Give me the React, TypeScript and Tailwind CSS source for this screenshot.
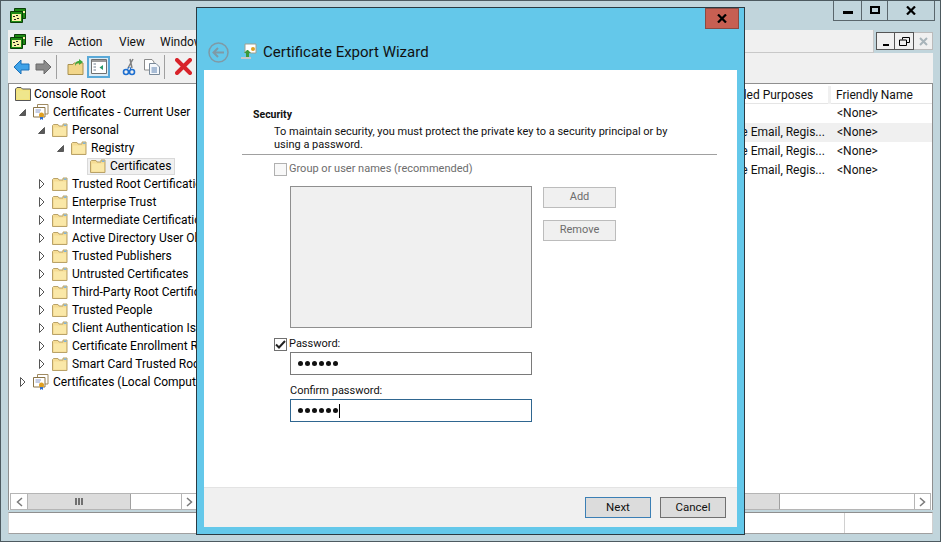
import React from "react";

const treeRows = [
  { label: "Trusted Root Certification Authorities" },
  { label: "Enterprise Trust" },
  { label: "Intermediate Certification Authorities" },
  { label: "Active Directory User Object" },
  { label: "Trusted Publishers" },
  { label: "Untrusted Certificates" },
  { label: "Third-Party Root Certification Authorities" },
  { label: "Trusted People" },
  { label: "Client Authentication Issuers" },
  { label: "Certificate Enrollment Requests" },
  { label: "Smart Card Trusted Roots" },
];

const Folder = () => (
  <svg width="16" height="14" viewBox="0 0 16 14" className="shrink-0">
    <path d="M0.5 13.5V2.5L1.5 1.5H6L7 3H11V1H15V13.5Z" fill="#f5dc94" stroke="#b9a268" />
    <path d="M2 4.5H14V12.5H2Z" fill="#fae8a8" />
    <path d="M12 1.5H14.5V3H12Z" fill="#7db4e0" />
  </svg>
);

const CertIcon = () => (
  <svg width="16" height="16" viewBox="0 0 16 16" className="shrink-0">
    <path d="M4.5 0.5H15V10H4.5Z" fill="#fff" stroke="#a08a60" />
    <path d="M0.5 3.5H12V13H0.5Z" fill="#fff" stroke="#8a7448" />
    <path d="M2.5 6H8M2.5 8H7" stroke="#8a9ac8" />
    <circle cx="8.5" cy="11" r="2.5" fill="#e0a020" />
    <path d="M7 13V16L8.5 15L10 16V13" fill="#2f6fd0" />
  </svg>
);

const MmcIcon = () => (
  <svg width="16" height="15" viewBox="0 0 16 15" className="shrink-0">
    <path d="M4.5 0.5H15.5V10.5H4.5Z" fill="#1f8a14" stroke="#0b3f08" />
    <path d="M0.5 3.5H12.5V14.5H0.5Z" fill="#1f8a14" stroke="#0b3f08" />
    <path d="M2 6H11V13H2Z" fill="#f8f2a6" />
    <path d="M3 8H5V9H3ZM6 7H8V8H6ZM7 10H9V11H7ZM4 11H6V12H4Z" fill="#222" />
    <path d="M13 3H15V5H13Z" fill="#f8f2a6" />
  </svg>
);

const Expanded = () => (
  <svg width="7" height="7" viewBox="0 0 7 7" className="shrink-0">
    <path d="M6.5 0.5V6.5H0.5Z" fill="#595959" stroke="#595959" />
  </svg>
);

const Collapsed = () => (
  <svg width="6" height="10" viewBox="0 0 6 10" className="ml-[1px] shrink-0">
    <path d="M0.5 0.5L5 5L0.5 9.5Z" fill="#fff" stroke="#555" />
  </svg>
);

const Chevron = ({ left }: { left?: boolean }) => (
  <svg width="7" height="10" viewBox="0 0 7 10">
    <path d={left ? "M6 1L1.5 5L6 9" : "M1 1L5.5 5L1 9"} fill="none" stroke="#7a7a7a" strokeWidth="1.5" />
  </svg>
);

const TreeRow = ({
  indent,
  arrow,
  icon,
  label,
}: {
  indent: string;
  arrow?: React.ReactNode;
  icon: React.ReactNode;
  label: string;
}) => (
  <div className={`flex h-[18px] items-center ${indent}`}>
    <span className="flex w-[14px] shrink-0 items-center">{arrow}</span>
    {icon}
    <span className="ml-[4px] whitespace-nowrap">{label}</span>
  </div>
);

const ToolbarSeparator = ({ className }: { className: string }) => (
  <div className={`h-[24px] w-px bg-[#a0a0a0] ${className}`} />
);

const Toolbar = () => (
  <div className="flex h-[30px] items-center bg-[#f0f0f0] pb-[3px] pl-[4px]">
    <svg width="18" height="16" viewBox="0 0 18 16" className="ml-[1px]">
      <path d="M1 8L8 1V5H16V11H8V15Z" fill="#3ea2e8" stroke="#1a70b8" />
    </svg>
    <svg width="18" height="16" viewBox="0 0 18 16" className="ml-[3px]">
      <path d="M17 8L10 1V5H2V11H10V15Z" fill="#8a8a8a" stroke="#6a6a6a" />
    </svg>
    <ToolbarSeparator className="ml-[4px]" />
    <svg width="18" height="18" viewBox="0 0 18 18" className="ml-[10px]">
      <path d="M1 6.5H6L7 5H16V16.5H1Z" fill="#f2d68a" stroke="#a8904f" />
      <path d="M8 8C8 4 10 3 12 3V1L16 4L12 7V5C10 5 9 6 8 8Z" fill="#3fa83a" />
    </svg>
    <div className="ml-[2px] flex h-[22px] w-[23px] items-center justify-center border-2 border-[#5aa9d8] bg-[#dcebf5]">
      <svg width="16" height="15" viewBox="0 0 16 15">
        <path d="M0.5 0.5H15.5V14.5H0.5Z" fill="#fff" stroke="#707070" />
        <path d="M1 1H15V3H1Z" fill="#9a9a9a" />
        <path d="M2.5 5H5M2.5 8H5M2.5 11H5" stroke="#708090" />
        <path d="M12 6V11L8.5 8.5Z" fill="#2a9a6a" />
      </svg>
    </div>
    <svg width="14" height="18" viewBox="0 0 14 18" className="ml-[12px]">
      <path d="M11 1L6 10M8 1L10 10" stroke="#808080" strokeWidth="1.5" />
      <circle cx="4" cy="14" r="2.5" fill="none" stroke="#1f70d0" strokeWidth="1.6" />
      <circle cx="10" cy="14" r="2.5" fill="none" stroke="#1f70d0" strokeWidth="1.6" />
      <path d="M5 12L7 9M9 12L8 9" stroke="#1f70d0" />
    </svg>
    <svg width="16" height="16" viewBox="0 0 16 16" className="ml-[8px]">
      <path d="M0.5 0.5H8L10 3V11H0.5Z" fill="#fff" stroke="#8a8a8a" />
      <path d="M5.5 4.5H12L15.5 8V15.5H5.5Z" fill="#f5f8fc" stroke="#7a8a9a" />
      <path d="M7.5 9H13M7.5 11H13M7.5 13H13" stroke="#5a80b0" />
    </svg>
    <ToolbarSeparator className="ml-[4px]" />
    <svg width="17" height="17" viewBox="0 0 17 17" className="ml-[10px]">
      <path d="M2 2L15 15M15 2L2 15" stroke="#d8232a" strokeWidth="4" strokeLinecap="round" />
    </svg>
  </div>
);

const ScrollBar = ({ thumb }: { thumb: string }) => (
  <div className="flex h-[17px] border border-[#b5b5b5] bg-white">
    <div className="flex w-[17px] shrink-0 items-center justify-center border-r border-[#b5b5b5]">
      <Chevron left />
    </div>
    <div className={`flex shrink-0 items-center justify-center gap-px border-r border-[#a0a0a0] bg-[#dcdcdc] ${thumb}`}>
      <span className="h-[7px] w-[2px] bg-[#707070]" />
      <span className="h-[7px] w-[2px] bg-[#707070]" />
      <span className="h-[7px] w-[2px] bg-[#707070]" />
    </div>
    <div className="flex-1" />
    <div className="flex w-[16px] shrink-0 items-center justify-center border-l border-[#b5b5b5]">
      <Chevron />
    </div>
  </div>
);

const TreePane = () => (
  <div className="flex w-[189px] shrink-0 flex-col overflow-hidden">
    <div className="flex-1 overflow-hidden pt-[1px] text-black">
      <div className="flex h-[18px] items-center pl-[6px]">
        <svg width="16" height="14" viewBox="0 0 16 14" className="shrink-0">
          <path d="M0.5 13.5V2L2 0.5H6L7.5 2H15.5V13.5Z" fill="#f3e27a" stroke="#555" />
          <path d="M2 3.5H14V12H2Z" fill="#efe68c" />
        </svg>
        <span className="ml-[3px] whitespace-nowrap">Console Root</span>
      </div>
      <TreeRow indent="pl-[10px]" arrow={<Expanded />} icon={<CertIcon />} label="Certificates - Current User" />
      <TreeRow indent="pl-[29px]" arrow={<Expanded />} icon={<Folder />} label="Personal" />
      <TreeRow indent="pl-[48px]" arrow={<Expanded />} icon={<Folder />} label="Registry" />
      <div className="flex h-[18px] items-center pl-[78px]">
        <div className="flex h-[17px] items-center gap-[4px] border border-[#d9d9d9] bg-[#f0f0f0] pl-[2px] pr-[3px]">
          <Folder />
          <span className="whitespace-nowrap">Certificates</span>
        </div>
      </div>
      {treeRows.map((row) => (
        <TreeRow key={row.label} indent="pl-[29px]" arrow={<Collapsed />} icon={<Folder />} label={row.label} />
      ))}
      <TreeRow indent="pl-[10px]" arrow={<Collapsed />} icon={<CertIcon />} label="Certificates (Local Computer)" />
    </div>
    <div className="pl-[1px]">
      <ScrollBar thumb="w-[103px]" />
    </div>
  </div>
);

const rows = [
  { purpose: "", name: "<None>", hl: false },
  { purpose: "Secure Email, Regis...", name: "<None>", hl: true },
  { purpose: "Secure Email, Regis...", name: "<None>", hl: false },
  { purpose: "Secure Email, Regis...", name: "<None>", hl: false },
];

const ListPane = () => (
  <div className="flex min-w-0 flex-1 flex-col">
    <div className="mt-[2px] flex h-[18px] items-center justify-end border-b border-[#e5e5e5] pt-[1px] pr-[8px]">
      <div className="w-[120px] border-r-[3px] border-[#f0f0f0] pl-[2px] whitespace-nowrap">Intended Purposes</div>
      <div className="w-[93px] pl-[5px]">Friendly Name</div>
    </div>
    <div className="flex-1">
      {rows.map((row, i) => (
        <div key={i} className={`flex h-[19px] items-center justify-end pr-[8px] pb-[1px] ${row.hl ? "bg-[#f0f0f0]" : ""}`}>
          <div className="w-[120px] whitespace-nowrap">{row.purpose}</div>
          <div className="w-[93px] pl-[6px]">{row.name}</div>
        </div>
      ))}
    </div>
    <div className="pr-[1px] pl-[2px]">
      <ScrollBar thumb="w-[562px]" />
    </div>
  </div>
);

const Checkbox = ({ checked }: { checked?: boolean }) => (
  <span
    className={`flex h-[13px] w-[13px] shrink-0 items-center justify-center border ${
      checked ? "border-[#707070] bg-white" : "border-[#b0b0b0] bg-[#f8f8f8]"
    }`}
  >
    {checked && (
      <svg width="11" height="9" viewBox="0 0 11 9">
        <path d="M1 4.5L4 7.5L10 1" fill="none" stroke="#222" strokeWidth="2" />
      </svg>
    )}
  </span>
);

const Dots = ({ caret }: { caret?: boolean }) => (
  <div className="flex items-center gap-[2px] pl-[7px]">
    {[0, 1, 2, 3, 4, 5].map((d) => (
      <span key={d} className="h-[5px] w-[5px] rounded-full bg-[#111]" />
    ))}
    {caret && <span className="-ml-[1px] h-[14px] w-px bg-black" />}
  </div>
);

const Dialog = () => (
  <div className="absolute top-[6px] left-[195px] flex h-[528px] w-[549px] flex-col border border-[#2b3a42] bg-[#64c8ea]">
    <div className="flex h-[19px] justify-end pr-[5px]">
      <div className="flex h-[21px] w-[34px] items-center justify-center border border-[#8a4a42] bg-[#c75f52]">
        <svg width="10" height="9" viewBox="0 0 10 9">
          <path d="M1 0.5L9 8.5M9 0.5L1 8.5" stroke="#000" strokeWidth="2.2" />
        </svg>
      </div>
    </div>
    <div className="flex h-[43px] items-center pt-[7px] pl-[11px]">
      <svg width="21" height="21" viewBox="0 0 21 21">
        <circle cx="10.5" cy="10.5" r="9.5" fill="none" stroke="#7f9aa6" strokeWidth="1.5" />
        <path d="M5 10.5H16M10 6L5.5 10.5L10 15" fill="none" stroke="#7f9aa6" strokeWidth="2" />
      </svg>
      <svg width="18" height="18" viewBox="0 0 18 18" className="ml-[11px]">
        <path d="M5 1H16V10H5Z" fill="#fff" stroke="#a0a090" />
        <path d="M7 7L4 10H6V14H9V10H11L8 7Z" fill="#3a9a3a" />
        <circle cx="13" cy="6" r="2" fill="#e0a020" />
        <path d="M1 14H11V16H1Z" fill="#c8c8c8" />
      </svg>
      <span className="ml-[5px] text-[15px] leading-[20px] text-[#111]">Certificate Export Wizard</span>
    </div>
    <div className="mx-[7px] mb-[7px] flex flex-1 flex-col bg-white text-[11px]">
      <div className="flex-1 pt-[38px] pl-[38px]">
        <div className="pl-[11px] text-[10.5px] leading-[13px] font-bold">Security</div>
        <div className="mt-[4px] pl-[32px] leading-[13px] whitespace-nowrap">
          To maintain security, you must protect the private key to a security principal or by
          <br />
          using a password.
        </div>
        <div className="mt-[3px] mr-[20px] h-px bg-[#a0a0a0]" />
        <div className="mt-[7px] flex items-center gap-[2px] pl-[32px] text-[#6d6d6d]">
          <Checkbox />
          <span className="leading-[14px]">Group or user names (recommended)</span>
        </div>
        <div className="mt-[10px] flex pl-[48px]">
          <div className="h-[142px] w-[242px] border border-[#8f8f8f] bg-[#f0f0f0]" />
          <div className="ml-[11px] flex w-[73px] flex-col gap-[12px] pt-[1px] text-[#6d6d6d]">
            <div className="flex h-[21px] items-center justify-center border border-[#bcbcbc] bg-[#f0f0f0]">Add</div>
            <div className="flex h-[21px] items-center justify-center border border-[#bcbcbc] bg-[#f0f0f0]">Remove</div>
          </div>
        </div>
        <div className="mt-[9px] flex items-center gap-[2px] pl-[32px]">
          <Checkbox checked />
          <span className="leading-[14px]">Password:</span>
        </div>
        <div className="mt-[1px] ml-[48px] flex h-[23px] w-[242px] items-center border border-[#7a7a7a]">
          <Dots />
        </div>
        <div className="mt-[8px] ml-[48px] leading-[16px]">Confirm password:</div>
        <div className="ml-[48px] flex h-[23px] w-[242px] items-center border border-[#2f6690]">
          <Dots caret />
        </div>
      </div>
      <div className="flex h-[40px] items-center justify-end gap-[9px] border-t border-[#e3e3e3] bg-[#f0f0f0] pr-[11px] text-[11.5px]">
        <div className="flex h-[21px] w-[66px] items-center justify-center border border-[#3b7fb5] bg-[#dcdcdc]">Next</div>
        <div className="flex h-[21px] w-[66px] items-center justify-center border border-[#707070] bg-[#dcdcdc]">Cancel</div>
      </div>
    </div>
  </div>
);

export default function App() {
  return (
    <div
      className="relative flex h-[542px] w-[941px] flex-col overflow-hidden border border-[#4d5a60] bg-[#c1d5dc] text-[12px] text-[#111]"
      style={{ fontFamily: 'Roboto, "Noto Sans", sans-serif' }}
    >
      <div className="flex h-[29px] shrink-0 justify-between">
        <div className="pt-[7px] pl-[9px]">
          <MmcIcon />
        </div>
        <div className="mr-[5px] -mt-px flex h-[21px] border-x border-b border-[#5a666c]">
          <div className="flex w-[28px] items-center justify-center border-r border-[#5a666c]">
            <span className="mt-[4px] h-[3px] w-[10px] bg-black" />
          </div>
          <div className="flex w-[26px] items-center justify-center border-r border-[#5a666c]">
            <span className="h-[8px] w-[10px] border-2 border-black" />
          </div>
          <div className="flex w-[46px] items-center justify-center">
            <svg width="10" height="9" viewBox="0 0 10 9">
              <path d="M1 0.5L9 8.5M9 0.5L1 8.5" stroke="#000" strokeWidth="2.2" />
            </svg>
          </div>
        </div>
      </div>
      <div className="mx-[7px] flex min-h-0 flex-1 flex-col">
        <div className="flex h-[23px] shrink-0">
          <div className="flex flex-1 items-center border-r border-b border-[#c8c8c8] bg-[#f0f0f0] pl-[2px]">
            <MmcIcon />
            <span className="ml-[8px] w-[34px] pt-[1px]">File</span>
            <span className="w-[51px] pt-[1px]">Action</span>
            <span className="w-[41px] pt-[1px]">View</span>
            <span className="pt-[1px]">Window</span>
          </div>
          <div className="mt-[2px] ml-[2px] flex h-[18px] w-[57px]">
            <div className="flex w-[19px] items-end justify-center border border-[#555] bg-[#f0f0f0] pb-[3px]">
              <span className="h-[2px] w-[6px] bg-black" />
            </div>
            <div className="flex w-[19px] items-center justify-center border-y border-r border-[#555] bg-[#f0f0f0]">
              <svg width="11" height="9" viewBox="0 0 11 9">
                <path d="M3.5 2.5V0.5H10.5V5.5H8M0.5 3H7.5V8.5H0.5Z" fill="none" stroke="#000" />
              </svg>
            </div>
            <div className="flex w-[19px] items-center justify-center border-y border-r border-[#bbb] bg-[#f0f0f0]">
              <svg width="9" height="9" viewBox="0 0 9 9">
                <path d="M1 1L8 8M8 1L1 8" stroke="#a8b4ba" strokeWidth="2" />
              </svg>
            </div>
          </div>
        </div>
        <Toolbar />
        <div className="flex min-h-0 flex-1 border-x border-t border-[#8f8f8f] bg-white">
          <TreePane />
          <ListPane />
        </div>
        <div className="mt-[2px] flex h-[22px] shrink-0 border border-x-[#d0d0d0] border-t-[#8f8f8f] border-b-[#a0a0a0] bg-white">
          <div className="w-[836px] border-r border-[#d0d0d0]" />
          <div className="flex-1" />
        </div>
        <div className="h-[7px] shrink-0" />
      </div>
      <Dialog />
    </div>
  );
}
